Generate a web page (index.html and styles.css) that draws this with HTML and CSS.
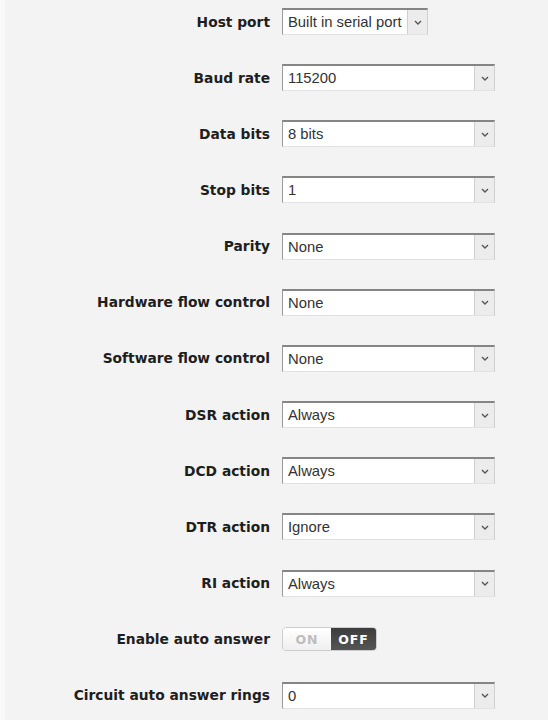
FILE: index.html
```html
<!DOCTYPE html>
<html lang="en">
<head>
    <meta charset="UTF-8">
    <meta name="viewport" content="width=device-width, initial-scale=1.0">
    <title>Serial port settings</title>
    <link rel="stylesheet" href="styles.css">
</head>
<body>
    <div class="form">
        <div class="row">
            <label class="label">Host port</label>
            <div class="select short">
                <span class="value">Built in serial port</span>
                <span class="arrow"><svg width="8" height="5" viewBox="0 0 8 5"><path d="M1 1l3 3 3-3" fill="none" stroke="#555" stroke-width="1.4"/></svg></span>
            </div>
        </div>

        <div class="row">
            <label class="label">Baud rate</label>
            <div class="select">
                <span class="value">115200</span>
                <span class="arrow"><svg width="8" height="5" viewBox="0 0 8 5"><path d="M1 1l3 3 3-3" fill="none" stroke="#555" stroke-width="1.4"/></svg></span>
            </div>
        </div>

        <div class="row">
            <label class="label">Data bits</label>
            <div class="select">
                <span class="value">8 bits</span>
                <span class="arrow"><svg width="8" height="5" viewBox="0 0 8 5"><path d="M1 1l3 3 3-3" fill="none" stroke="#555" stroke-width="1.4"/></svg></span>
            </div>
        </div>

        <div class="row">
            <label class="label">Stop bits</label>
            <div class="select">
                <span class="value">1</span>
                <span class="arrow"><svg width="8" height="5" viewBox="0 0 8 5"><path d="M1 1l3 3 3-3" fill="none" stroke="#555" stroke-width="1.4"/></svg></span>
            </div>
        </div>

        <div class="row">
            <label class="label">Parity</label>
            <div class="select">
                <span class="value">None</span>
                <span class="arrow"><svg width="8" height="5" viewBox="0 0 8 5"><path d="M1 1l3 3 3-3" fill="none" stroke="#555" stroke-width="1.4"/></svg></span>
            </div>
        </div>

        <div class="row">
            <label class="label">Hardware flow control</label>
            <div class="select">
                <span class="value">None</span>
                <span class="arrow"><svg width="8" height="5" viewBox="0 0 8 5"><path d="M1 1l3 3 3-3" fill="none" stroke="#555" stroke-width="1.4"/></svg></span>
            </div>
        </div>

        <div class="row">
            <label class="label">Software flow control</label>
            <div class="select">
                <span class="value">None</span>
                <span class="arrow"><svg width="8" height="5" viewBox="0 0 8 5"><path d="M1 1l3 3 3-3" fill="none" stroke="#555" stroke-width="1.4"/></svg></span>
            </div>
        </div>

        <div class="row">
            <label class="label">DSR action</label>
            <div class="select">
                <span class="value">Always</span>
                <span class="arrow"><svg width="8" height="5" viewBox="0 0 8 5"><path d="M1 1l3 3 3-3" fill="none" stroke="#555" stroke-width="1.4"/></svg></span>
            </div>
        </div>

        <div class="row">
            <label class="label">DCD action</label>
            <div class="select">
                <span class="value">Always</span>
                <span class="arrow"><svg width="8" height="5" viewBox="0 0 8 5"><path d="M1 1l3 3 3-3" fill="none" stroke="#555" stroke-width="1.4"/></svg></span>
            </div>
        </div>

        <div class="row">
            <label class="label">DTR action</label>
            <div class="select">
                <span class="value">Ignore</span>
                <span class="arrow"><svg width="8" height="5" viewBox="0 0 8 5"><path d="M1 1l3 3 3-3" fill="none" stroke="#555" stroke-width="1.4"/></svg></span>
            </div>
        </div>

        <div class="row">
            <label class="label">RI action</label>
            <div class="select">
                <span class="value">Always</span>
                <span class="arrow"><svg width="8" height="5" viewBox="0 0 8 5"><path d="M1 1l3 3 3-3" fill="none" stroke="#555" stroke-width="1.4"/></svg></span>
            </div>
        </div>

        <div class="row">
            <label class="label">Enable auto answer</label>
            <div class="toggle">
                <span class="toggle-on">ON</span>
                <span class="toggle-off">OFF</span>
            </div>
        </div>

        <div class="row">
            <label class="label">Circuit auto answer rings</label>
            <div class="select">
                <span class="value">0</span>
                <span class="arrow"><svg width="8" height="5" viewBox="0 0 8 5"><path d="M1 1l3 3 3-3" fill="none" stroke="#555" stroke-width="1.4"/></svg></span>
            </div>
        </div>
    </div>
</body>
</html>
```

FILE: styles.css
```css
* {
    margin: 0;
    padding: 0;
    box-sizing: border-box;
}

body {
    font-family: "DejaVu Sans", Verdana, sans-serif;
    background: #f3f3f3;
    border-left: 5px solid #f9f9f9;
    min-height: 100vh;
    color: #222;
}

.form {
    padding-top: 8px;
}

.row {
    display: flex;
    align-items: center;
    height: 27px;
    margin-bottom: 29.17px;
}

.label {
    width: 277px;
    padding-right: 12px;
    text-align: right;
    font-size: 13.8px;
    font-weight: bold;
    color: #1e1e1e;
}

.select {
    display: flex;
    align-items: stretch;
    width: 213px;
    height: 27px;
    background: #fff;
    border-top: 2px solid #858585;
    border-left: 1px solid #9a9a9a;
    border-right: 1px solid #d0d0d0;
    border-bottom: 1px solid #e2e2e2;
}

.select.short {
    width: 146px;
}

.value {
    flex: 1;
    display: flex;
    align-items: center;
    padding-left: 5px;
    font-family: "Liberation Sans", Arial, sans-serif;
    font-size: 14.8px;
    color: #333;
    white-space: nowrap;
    overflow: hidden;
}

.arrow {
    width: 20px;
    display: flex;
    align-items: center;
    justify-content: center;
    background: #ececec;
    border-left: 1px solid #cfcfcf;
}

.toggle {
    display: flex;
    width: 95px;
    height: 24px;
    border: 1px solid #cdcdcd;
    border-radius: 4px;
    overflow: hidden;
    font-size: 12.5px;
    font-weight: bold;
    letter-spacing: 1px;
}

.toggle-on {
    width: 48px;
    display: flex;
    align-items: center;
    justify-content: center;
    background: linear-gradient(#ffffff, #efefef);
    color: #bdbdbd;
}

.toggle-off {
    flex: 1;
    display: flex;
    align-items: center;
    justify-content: center;
    background: linear-gradient(#3c3c3c, #555);
    color: #fff;
}
```
